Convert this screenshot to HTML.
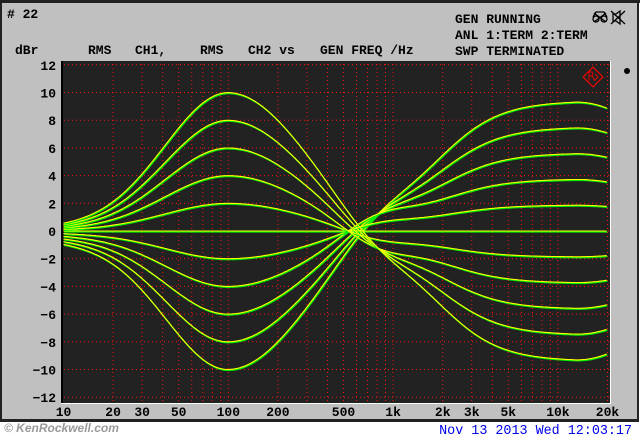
<!DOCTYPE html>
<html><head><meta charset="utf-8"><style>
html,body{margin:0;padding:0;background:#fff;width:640px;height:436px;overflow:hidden}
svg{display:block}
text{font-family:"Liberation Mono",monospace;font-weight:bold;font-size:13px;fill:#000}
</style></head><body>
<svg id="s" width="640" height="436" viewBox="0 0 640 436" xmlns="http://www.w3.org/2000/svg">
<rect x="0" y="0" width="640" height="436" fill="#fff"/>
<rect x="0" y="0" width="640" height="3" fill="#222"/>
<rect x="637" y="0" width="2" height="422" fill="#222"/>
<rect x="0" y="3" width="2" height="419" fill="#222"/>
<rect x="2" y="3" width="635" height="417" fill="#c0c0c0"/>
<rect x="0" y="419" width="639" height="3" fill="#222"/>
<rect x="61" y="61" width="550" height="343" fill="#fff"/>
<rect x="61" y="61" width="549" height="342" fill="#222"/>
<rect x="61" y="61" width="2" height="342" fill="#000"/>
<g id="grid" stroke="#ff1010" stroke-width="1" stroke-dasharray="1 3"></g>
<g id="curves" fill="none"></g>
<g transform="translate(593,77) rotate(45)"><rect x="-7" y="-7" width="14" height="14" fill="none" stroke="#e00" stroke-width="1.2"/></g>
<path d="M589,72 v9 M589,72 h3 l1,2 l-1,2 h-3 M592,76 l3,5 M595,74 l3,3 l-3,3" stroke="#e00" fill="none" stroke-width="0.9"/>
<text x="7" y="18">#  22</text>
<text x="15" y="54">dBr</text>
<text x="88" y="54">RMS</text>
<text x="135" y="54">CH1,</text>
<text x="200" y="54">RMS</text>
<text x="248" y="54">CH2 vs</text>
<text x="320" y="54">GEN FREQ /Hz</text>
<text x="455" y="23">GEN RUNNING</text>
<text x="455" y="39">ANL 1:TERM 2:TERM</text>
<text x="455" y="55">SWP TERMINATED</text>
<g stroke="#000" fill="none" stroke-width="1.3">
<circle cx="596" cy="19" r="3"/><circle cx="604" cy="19" r="3"/><path d="M593,17 l3,-5 h8 l3,5 M594,13 l12,9 M606,13 l-12,9"/>
<path d="M613,14 h3 l4,-3 v13 l-4,-3 h-3 z M611,11 l14,13 M625,11 l-14,13"/>
</g>
<circle cx="627" cy="71" r="3" fill="#000"/>
<g id="ylab" text-anchor="end"></g>
<g id="xlab" text-anchor="middle"></g>
<text x="4" y="432" style="font-family:'Liberation Sans',sans-serif;font-style:italic;font-size:12px;fill:#999">© KenRockwell.com</text>
<text x="632" y="434" text-anchor="end" style="fill:#0000ee;font-weight:normal;font-size:13.4px">Nov 13 2013 Wed 12:03:17</text>
</svg>
<script>
var NS="http://www.w3.org/2000/svg";
function X(f){return 63.5+(Math.log10(f)-1)*164.8}
function Y(d){return 231-d*13.85}
function el(t,a,p,txt){var e=document.createElementNS(NS,t);for(var k in a)e.setAttribute(k,a[k]);if(txt!==undefined)e.textContent=txt;document.getElementById(p).appendChild(e);}
for(var d=-12;d<=12;d+=2){el("line",{x1:64,x2:609,y1:Y(d),y2:Y(d)},"grid");el("text",{x:56,y:Y(d)+5},"ylab",String(d).replace("-","\u2212"));}
var fs=[];
[10,100,1000,10000].forEach(function(b){for(var m=1;m<10;m++){var f=b*m;if(f<=20000)fs.push(f);}});
fs.push(20000);
fs.forEach(function(f){if(f>10)el("line",{x1:X(f),x2:X(f),y1:64,y2:402},"grid");});
[[10,"10"],[20,"20"],[30,"30"],[50,"50"],[100,"100"],[200,"200"],[500,"500"],[1000,"1k"],[2000,"2k"],[3000,"3k"],[5000,"5k"],[10000,"10k"],[20000,"20k"]].forEach(function(a){el("text",{x:X(a[0]),y:416},"xlab",a[1]);});
function B(L){var w=L<2?0.55:0.65;return 10*Math.exp(-Math.pow((L-2)/w,2));}
function T(L){var v=9.4*(1+Math.tanh((L-3.24)/0.38))/2;if(L>4.1)v*=Math.exp(-Math.pow((L-4.1)/0.85,2));return v;}
function h(L){return B(L)-T(L);}
for(var k=-5;k<=5;k++){
 var p="",s=k>0?1:(k<0?-1:0),wt=Math.min(Math.abs(k)/2,1);
 for(var L=1;L<=4.301;L+=0.008){
  var v=h(L)*k/5 - 1.25*s*wt*Math.exp(-Math.pow((L-2.9)/0.3,2)) + (k<0?-0.6:0.2)*Math.abs(k)/5*Math.exp(-Math.pow((L-1)/0.5,2));
  p+=(p?"L":"M")+X(Math.pow(10,L)).toFixed(1)+","+Y(v).toFixed(1);}
 el("path",{d:p,stroke:"#00ee00","stroke-width":1.4,transform:"translate(0.7,0.9)"},"curves");
 el("path",{d:p,stroke:"#ffff00","stroke-width":1.1},"curves");
}
</script>
</body></html>
